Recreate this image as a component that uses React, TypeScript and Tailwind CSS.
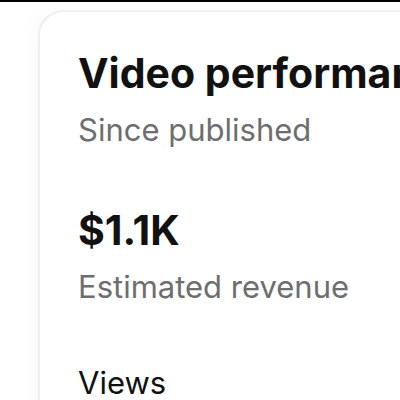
export default function App() {
  return (
    <div className="w-[400px] h-[400px] overflow-hidden bg-white border-t-2 border-black" style={{ fontFamily: "Inter, 'Liberation Sans', sans-serif" }}>
      <div className="pl-[38px] pt-[8px]">
        <div className="w-[440px] h-[440px] rounded-tl-[26px] border-2 border-[#efefef] bg-white shadow-[-8px_0_16px_rgba(0,0,0,0.02)] pl-[38px] pt-[36px]">
          <h1 className="text-[41px] leading-[50px] font-bold text-[#111] whitespace-nowrap">Video performance</h1>
          <p className="mt-[13px] text-[31px] leading-[38px] text-[#6e6e6e] whitespace-nowrap">Since published</p>
          <p className="mt-[56px] text-[41px] leading-[50px] font-bold text-[#111]">$1.1K</p>
          <p className="mt-[13px] text-[31px] leading-[38px] text-[#6e6e6e] whitespace-nowrap">Estimated revenue</p>
          <p className="mt-[58px] text-[31px] leading-[38px] text-[#111]">Views</p>
        </div>
      </div>
    </div>
  );
}
